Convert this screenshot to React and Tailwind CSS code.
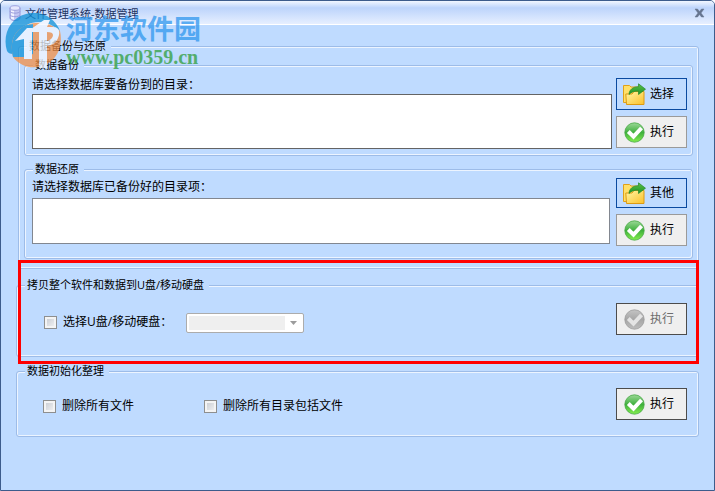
import { useState } from 'react'
import { clsx } from 'clsx'

function DatabaseIcon() {
  return (
    <svg className="w-3 h-4" viewBox="0 0 12 16" aria-hidden="true">
      <path d="M1 3v10c0 1.400 2.200 2.500 5 2.500s5-1.100 5-2.500V3z" fill="#c3c6f2" stroke="#9396d8" />
      <path d="M2 4v9.500c.8.700 1.800 1 3 1.200V5z" fill="#f1f2ff" />
      <path d="M1 6.500c1 2.200 9 2.200 10 0M1 10c1 2.200 9 2.200 10 0" fill="none" stroke="#9a9ddb" />
      <ellipse cx="6" cy="3" rx="5" ry="2.300" fill="#e6e7fd" stroke="#9fa2de" />
    </svg>
  )
}

function FolderIcon() {
  return (
    <svg className="w-6 h-6 shrink-0" viewBox="0 0 24 24" aria-hidden="true">
      <defs>
        <linearGradient id="folder" x1="0" y1="0" x2="1" y2="1">
          <stop offset="0" stopColor="#fff7a8" />
          <stop offset="1" stopColor="#fbc02a" />
        </linearGradient>
        <linearGradient id="arrow" x1="0" y1="0" x2="0" y2="1">
          <stop offset="0" stopColor="#5cc046" />
          <stop offset="1" stopColor="#1f9428" />
        </linearGradient>
      </defs>
      <path d="M1.500 20.500v-17h6l1.500 1.500h9v15.500z" fill="#ffe06a" stroke="#e0a11a" />
      <path d="M4.500 22.500 3.800 12H10l2-2.500h10v13z" fill="url(#folder)" stroke="#dd9a12" />
      <path d="M7 12.500c.3-5 4-7.800 9.500-7.800V1.800l7 5.400-7 5.300V9.200c-4-.3-7 .5-9.500 3.300z" fill="url(#arrow)" stroke="#238a2b" strokeWidth=".7" />
    </svg>
  )
}

function CheckIcon({ disabled }) {
  return (
    <svg className="w-6 h-6 shrink-0" viewBox="0 0 24 24" aria-hidden="true">
      <defs>
        <linearGradient id="ok" x1="0" y1="0" x2="0" y2="1">
          <stop offset="0" stopColor="#9bd897" />
          <stop offset=".5" stopColor="#3fb03d" />
          <stop offset="1" stopColor="#84ee4e" />
        </linearGradient>
        <linearGradient id="off" x1="0" y1="0" x2="0" y2="1">
          <stop offset="0" stopColor="#c4c4c4" />
          <stop offset=".5" stopColor="#a6a6a6" />
          <stop offset="1" stopColor="#bdbdbd" />
        </linearGradient>
      </defs>
      <circle cx="12.500" cy="12.500" r="9.700" fill={disabled ? 'url(#off)' : 'url(#ok)'} stroke={disabled ? '#9b9b9b' : '#45a842'} strokeWidth=".8" />
      <path d="m6.300 11.500 5.200 5.200 8-8.700" fill="none" stroke={disabled ? '#e4e4e4' : '#fff'} strokeWidth="4" />
    </svg>
  )
}

function Group({ title, className, contentClass, children }) {
  return (
    <fieldset className={clsx('min-w-0 rounded-[3px] border border-[#9dbce8] shadow-[inset_1px_1px_0_#ecf4ff,inset_-1px_-1px_0_#ecf4ff]', className)}>
      <legend className="ml-[8px] bg-[#bfdbff] pl-[2px] pr-[5px] text-[11px] leading-[14px]">{title}</legend>
      <div className={contentClass}>{children}</div>
    </fieldset>
  )
}

function ActionButton({ icon, variant = 'plain', className, children, ...props }) {
  return (
    <button
      type="button"
      className={clsx(
        'flex w-[71px] shrink-0 items-center gap-1 border pl-[5px] text-xs disabled:text-[#6d6d6d]',
        variant === 'primary' && 'border-[#0a4aa0] bg-[#bfdbff]',
        variant === 'plain' && 'border-[#9a9a9a] bg-[#efefef]',
        variant === 'dark' && 'border-[#4c4c4c] bg-[#efefef]',
        className || 'h-8'
      )}
      {...props}
    >
      {icon}
      {children}
    </button>
  )
}

function CheckOption({ label, className }) {
  return (
    <label className={clsx('flex items-center gap-[6px]', className)}>
      <input
        type="checkbox"
        className="h-[13px] w-[13px] appearance-none border border-[#8e8f8f] bg-linear-to-br from-[#c4c8cf] to-[#f6f6f6] shadow-[inset_0_0_0_2px_#f4f4f4] checked:from-[#2c4f8f] checked:to-[#2c4f8f]"
      />
      {label}
    </label>
  )
}

function Watermark() {
  return (
    <div className="pointer-events-none absolute left-[4px] top-[12px] flex items-start gap-1 opacity-75">
      <svg className="h-[56px] w-[57px]" viewBox="0 0 57 56" aria-hidden="true">
        <path d="M2 38C-3 22 5 5 21 1c14-4 29 3 34 17-9-8-22-12-33-6C10 18 5 27 8 41c-3 0-5-1-6-3z" fill="#0c8fd6" />
        <path d="M8 44C4 28 10 16 22 12c12-5 25-1 33 6 3 14-2 27-13 33S16 55 8 44z" fill="#f39046" />
        <path d="M8 44C4 28 10 16 22 12l6-1v30l-9 3z" fill="#0c8fd6" />
        <path d="M10 28 22 15h5v31h-8V26zM26 16 39 7h6l-3 7h6c5 0 7 3 6 8s-5 10-12 11v22h-8V19h-8zm16 3v9c4-1 6-4 6-6s-2-3-6-3z" fill="#f3f8ff" />
      </svg>
      <div className="whitespace-nowrap">
        <p className="text-[27px] font-bold leading-[32px] text-[#2f97ee]">河东软件园</p>
        <p className="font-['Liberation_Serif',serif] text-[20px] font-bold leading-[24px] text-[#2f9e3c]">www.pc0359.cn</p>
      </div>
    </div>
  )
}

export default function App() {
  const [backupDir, setBackupDir] = useState('')
  const [restoreDir, setRestoreDir] = useState('')

  return (
    <div className="relative flex min-h-screen flex-col rounded-t-[5px] border border-[#3d5c8c] bg-[#bfdbff] font-['Open_Sans','Noto_Sans_CJK_SC',sans-serif] text-xs text-black">
      {/* Title bar */}
      <header className="flex h-6 items-center rounded-t-[4px] border-b border-white bg-linear-to-b from-[#f2f7ff] via-[#bdd4fb] via-30% to-[#e6efff] pl-2 pr-[7px]">
        <DatabaseIcon />
        <h1 className="ml-1 flex-1 pt-[2px] text-[11px] leading-[16px] text-[#1c3260]">文件管理系统-数据管理</h1>
        <button type="button" aria-label="关闭" className="p-[2px]">
          <svg className="h-[10px] w-[11px]" viewBox="0 0 11 10" aria-hidden="true">
            <path d="M1 1h2.500l2 2.500L7.500 1H10L7 5l3 4H7.500l-2-2.500L3.500 9H1l3-4z" fill="#66758f" stroke="#66758f" strokeWidth=".5" />
          </svg>
        </button>
      </header>

      <main className="flex-1 px-[15px] pt-[14px]">
        <Group title="数据备份与还原" className="ml-[2px]" contentClass="px-[5px] pb-[9px] pt-[5px]">
          {/* Backup */}
          <Group title="数据备份" contentClass="pb-[6px] pl-[7px] pr-[5px] pt-[6px]">
            <div className="flex gap-1">
              <div className="flex flex-1 flex-col">
                <label htmlFor="backup" className="h-4 leading-[14px]">请选择数据库要备份到的目录：</label>
                <textarea
                  id="backup"
                  value={backupDir}
                  onChange={(e) => setBackupDir(e.target.value)}
                  className="h-[55px] resize-none border border-[#646464] bg-white p-1"
                />
              </div>
              <div className="flex flex-col gap-[6px]">
                <ActionButton variant="primary" icon={<FolderIcon />}>选择</ActionButton>
                <ActionButton icon={<CheckIcon />}>执行</ActionButton>
              </div>
            </div>
          </Group>

          {/* Restore */}
          <Group title="数据还原" className="mt-[6px]" contentClass="pb-[12px] pl-[7px] pr-[5px] pt-[2px]">
            <div className="flex gap-[6px]">
              <div className="flex flex-1 flex-col pt-[2px]">
                <label htmlFor="restore" className="h-[18px] leading-[14px]">请选择数据库已备份好的目录项：</label>
                <textarea
                  id="restore"
                  value={restoreDir}
                  onChange={(e) => setRestoreDir(e.target.value)}
                  className="h-[46px] resize-none border border-[#828790] bg-white p-1"
                />
              </div>
              <div className="flex flex-col gap-[6px]">
                <ActionButton variant="primary" className="h-[30px]" icon={<FolderIcon />}>其他</ActionButton>
                <ActionButton icon={<CheckIcon />}>执行</ActionButton>
              </div>
            </div>
          </Group>
        </Group>

        {/* Copy to USB drive */}
        <div className="relative mt-[9px]">
          <Group title="拷贝整个软件和数据到U盘/移动硬盘" contentClass="pb-[21px] pl-[27px] pr-[11px] pt-[11px]">
            <div className="flex items-center">
              <CheckOption label="选择U盘/移动硬盘：" className="pt-[6px]" />
              <div className="relative ml-[14px] mt-2">
                <select disabled aria-label="U盘/移动硬盘" className="block h-5 w-[118px] appearance-none rounded-[2px] border border-[#acacac] bg-[#efefef] shadow-[inset_0_0_0_2px_#fff]" />
                <span className="pointer-events-none absolute inset-y-[2px] right-[2px] flex w-[17px] items-center justify-center bg-white">
                  <svg className="h-1 w-[7px]" viewBox="0 0 7 4" aria-hidden="true">
                    <path d="M0 0h7L3.500 4z" fill="#9c9c9c" />
                  </svg>
                </span>
              </div>
              <ActionButton variant="dark" className="ml-auto h-8" disabled icon={<CheckIcon disabled />}>执行</ActionButton>
            </div>
          </Group>
          <div className="pointer-events-none absolute -bottom-[7px] -top-[18px] left-[2px] right-0 border-[3px] border-[#ff0000]" />
        </div>

        {/* Initialise data */}
        <Group title="数据初始化整理" className="mt-[7px]" contentClass="pb-[16px] pl-[26px] pr-[11px] pt-[10px]">
          <div className="flex items-center">
            <CheckOption label="删除所有文件" className="w-[161px] pt-[4px]" />
            <CheckOption label="删除所有目录包括文件" className="pt-[4px]" />
            <ActionButton variant="dark" className="ml-auto h-8" icon={<CheckIcon />}>执行</ActionButton>
          </div>
        </Group>
      </main>

      <Watermark />
    </div>
  )
}
